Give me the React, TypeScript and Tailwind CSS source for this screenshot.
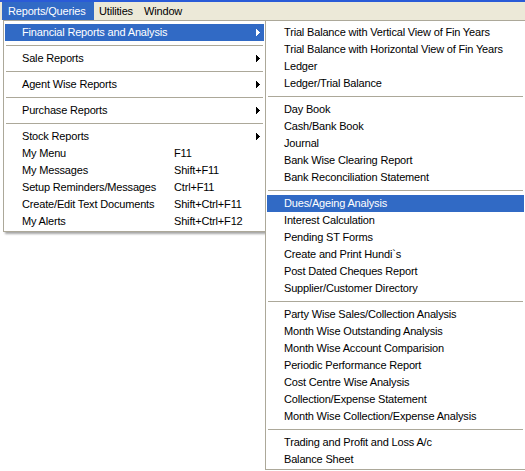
import React from "react";

type Item =
  | { sep: true }
  | { label: string; shortcut?: string; arrow?: boolean; active?: boolean; sep?: false };

const mainItems: Item[] = [
  { label: "Financial Reports and Analysis", arrow: true, active: true },
  { sep: true },
  { label: "Sale Reports", arrow: true },
  { sep: true },
  { label: "Agent Wise Reports", arrow: true },
  { sep: true },
  { label: "Purchase Reports", arrow: true },
  { sep: true },
  { label: "Stock Reports", arrow: true },
  { label: "My Menu", shortcut: "F11" },
  { label: "My Messages", shortcut: "Shift+F11" },
  { label: "Setup Reminders/Messages", shortcut: "Ctrl+F11" },
  { label: "Create/Edit Text Documents", shortcut: "Shift+Ctrl+F11" },
  { label: "My Alerts", shortcut: "Shift+Ctrl+F12" },
];

const subItems: Item[] = [
  { label: "Trial Balance with Vertical View of Fin Years" },
  { label: "Trial Balance with Horizontal View of Fin Years" },
  { label: "Ledger" },
  { label: "Ledger/Trial Balance" },
  { sep: true },
  { label: "Day Book" },
  { label: "Cash/Bank Book" },
  { label: "Journal" },
  { label: "Bank Wise Clearing Report" },
  { label: "Bank Reconciliation Statement" },
  { sep: true },
  { label: "Dues/Ageing Analysis", active: true },
  { label: "Interest Calculation" },
  { label: "Pending ST Forms" },
  { label: "Create and Print Hundi`s" },
  { label: "Post Dated Cheques Report" },
  { label: "Supplier/Customer Directory" },
  { sep: true },
  { label: "Party Wise Sales/Collection Analysis" },
  { label: "Month Wise Outstanding Analysis" },
  { label: "Month Wise Account Comparision" },
  { label: "Periodic Performance Report" },
  { label: "Cost Centre Wise Analysis" },
  { label: "Collection/Expense Statement" },
  { label: "Month Wise Collection/Expense Analysis" },
  { sep: true },
  { label: "Trading and Profit and Loss A/c" },
  { label: "Balance Sheet" },
];

function Arrow({ white }: { white?: boolean }) {
  return (
    <svg width="4" height="7" viewBox="0 0 4 7" shapeRendering="crispEdges" className="block">
      <polygon points="0,0 4,3.5 0,7" fill={white ? "#ffffff" : "#000000"} />
    </svg>
  );
}

function MenuList({ items, withShortcut }: { items: Item[]; withShortcut?: boolean }) {
  return (
    <div className="flex flex-col">
      {items.map((it, i) =>
        it.sep ? (
          <div key={i} className="h-[9px] flex items-center">
            <div className="h-px w-full mx-[1px] bg-[#aca899]" />
          </div>
        ) : (
          <div
            key={i}
            className={`h-[17px] flex items-center pl-[17px] pr-[4px] whitespace-nowrap ${
              it.active ? "bg-[#316ac5] text-white" : "text-black"
            }`}
          >
            <span className={withShortcut ? "w-[152px] shrink-0" : ""}>{it.label}</span>
            {it.shortcut && <span>{it.shortcut}</span>}
            <span className="flex-1" />
            {it.arrow && <Arrow white={it.active} />}
          </div>
        )
      )}
    </div>
  );
}

export default function App() {
  return (
    <div
      className="relative w-[525px] h-[471px] bg-white overflow-hidden text-[11px] leading-[13px] tracking-[-0.17px]"
      style={{ fontFamily: '"Liberation Sans", Arial, sans-serif' }}
    >
      <div className="h-[2px] bg-[#2a5bd7]" />
      <div className="h-[18px] bg-[#ece9d8] flex items-stretch pl-[2px]">
        <div className="bg-[#316ac5] text-white flex items-center pl-[6px] w-[92px]">Reports/Queries</div>
        <div className="flex items-center pl-[5px] w-[50px]">Utilities</div>
        <div className="flex items-center">Window</div>
      </div>

      <div className="absolute left-[3px] top-[20px] w-[263px] bg-white border border-[#aca899] pt-[3px] pb-[1px] px-[1px] shadow-[2px_2px_2px_rgba(0,0,0,0.35)]">
        <MenuList items={mainItems} withShortcut />
      </div>

      <div className="absolute left-[265px] top-[20px] w-[261px] bg-white border border-[#aca899] pt-[3px] pb-[1px] px-[1px]">
        <MenuList items={subItems} />
      </div>
    </div>
  );
}
